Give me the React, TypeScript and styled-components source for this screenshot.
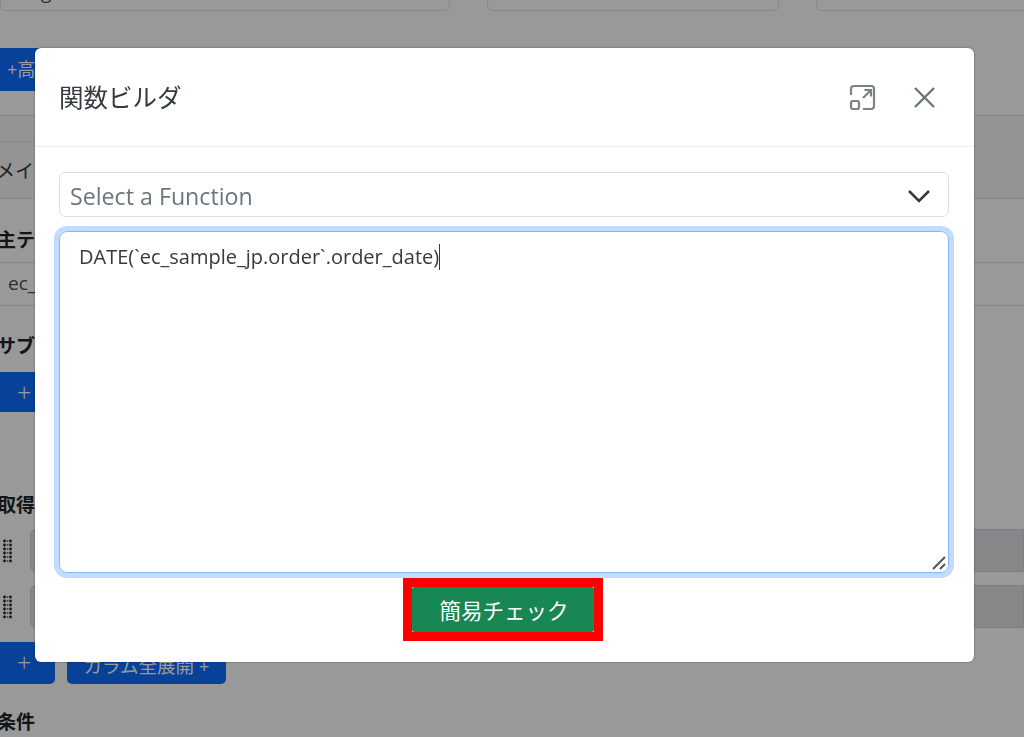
import styled, { createGlobalStyle } from 'styled-components';

const FONT_STACK = `"Open Sans", "Noto Sans CJK JP", sans-serif`;

const GlobalStyle = createGlobalStyle`
  html, body {
    margin: 0;
    padding: 0;
    background: white;
  }

  * {
    box-sizing: border-box;
  }
`;

function DragDots() {
  const rows = [0, 1, 2, 3, 4, 5];
  return (
    <StyledDots width="9" height="24" viewBox="0 0 9 24">
      {rows.map((row) => (
        <g key={row}>
          <circle cx="1.5" cy={2 + row * 4} r="1.4" fill="#212529" />
          <circle cx="4.5" cy={2 + row * 4} r="1" fill="#6c757d" />
          <circle cx="7.5" cy={2 + row * 4} r="1.4" fill="#212529" />
        </g>
      ))}
    </StyledDots>
  );
}

function ExpandIcon() {
  return (
    <svg width="27" height="27" viewBox="0 0 27 27" fill="none" stroke="#7a8288" strokeWidth="2.2">
      <path d="M2 11V5a3 3 0 0 1 3-3h17a3 3 0 0 1 3 3v17a3 3 0 0 1-3 3h-8" />
      <rect x="2" y="17" width="8" height="8" rx="2" />
      <path d="M14 14l8-8M15.5 6H22v6.5" />
    </svg>
  );
}

function CloseIcon() {
  return (
    <svg width="23" height="21" viewBox="0 0 23 21" fill="none" stroke="#6c757d" strokeWidth="2.4">
      <path d="M2 1l19 19M21 1L2 20" />
    </svg>
  );
}

function ChevronIcon() {
  return (
    <svg width="24" height="14" viewBox="0 0 24 14" fill="none" stroke="#343a40" strokeWidth="2.6">
      <path d="M2 2l10 10L22 2" />
    </svg>
  );
}

function ResizeGrip() {
  return (
    <StyledGrip width="14" height="14" viewBox="0 0 14 14" fill="none" stroke="#555" strokeWidth="2">
      <path d="M1 13L13 1M8 13l5-5" />
    </StyledGrip>
  );
}

function BackgroundPage() {
  return (
    <StyledPage>
      <StyledTopFields>
        <StyledTopField>
          <StyledTopText>g 1</StyledTopText>
        </StyledTopField>
        <StyledTopField />
        <StyledTopField />
      </StyledTopFields>
      <StyledAdvancedButton>+高</StyledAdvancedButton>
      <StyledCardHeader>
        <StyledTab />
        <StyledTabLabel>メイ</StyledTabLabel>
      </StyledCardHeader>
      <StyledBody>
        <StyledSectionLabel $top={29}>主テ</StyledSectionLabel>
        <StyledTableField>ec_</StyledTableField>
        <StyledSectionLabel $top={28}>サブ</StyledSectionLabel>
        <StyledAddRow $top={14} $height={40}>
          <StyledPlusButton $width={70}>+</StyledPlusButton>
        </StyledAddRow>
        <StyledSectionLabel $top={81}>取得</StyledSectionLabel>
        <StyledColumnRow $top={12}>
          <DragDots />
          <StyledColumnField />
        </StyledColumnRow>
        <StyledColumnRow $top={13}>
          <DragDots />
          <StyledColumnField />
        </StyledColumnRow>
        <StyledAddRow $top={14} $height={42}>
          <StyledPlusButton $width={59}>+</StyledPlusButton>
          <StyledExpandButton>カラム全展開 +</StyledExpandButton>
        </StyledAddRow>
        <StyledSectionLabel $top={26}>条件</StyledSectionLabel>
      </StyledBody>
    </StyledPage>
  );
}

function App() {
  return (
    <>
      <GlobalStyle />
      <BackgroundPage />
      <StyledOverlay>
        <StyledModal>
          <StyledHeader>
            <StyledTitle>関数ビルダ</StyledTitle>
            <StyledHeaderActions>
              <ExpandIcon />
              <CloseIcon />
            </StyledHeaderActions>
          </StyledHeader>
          <StyledModalBody>
            <StyledSelect>
              Select a Function
              <ChevronIcon />
            </StyledSelect>
            <StyledEditor>
              DATE(`ec_sample_jp.order`.order_date)
              <StyledCaret />
              <ResizeGrip />
            </StyledEditor>
            <StyledRedFrame>
              <StyledCheckButton>簡易チェック</StyledCheckButton>
            </StyledRedFrame>
          </StyledModalBody>
        </StyledModal>
      </StyledOverlay>
    </>
  );
}

const StyledPage = styled.div`
  width: 1024px;
  height: 737px;
  overflow: hidden;
  background: white;
  color: #212529;
  font-family: ${FONT_STACK};
`;

const StyledTopFields = styled.div`
  display: grid;
  grid-template-columns: 450px 292px 1fr;
  column-gap: 37px;
  height: 11px;
  margin-right: -20px;
`;

const StyledTopField = styled.div`
  height: 41px;
  margin-top: -30px;
  padding: 8px 40px;
  border: 1.5px solid #dee2e6;
  border-radius: 6px;
  font-size: 19px;
`;

const StyledTopText = styled.span`
  color: #495057;
`;

const StyledAdvancedButton = styled.div`
  width: 200px;
  height: 43px;
  margin-top: 37px;
  padding-left: 7px;
  background: #0d6efd;
  color: white;
  font-size: 18px;
  line-height: 43px;
`;

const StyledCardHeader = styled.div`
  height: 84px;
  margin-top: 24px;
  background: #f7f7f7;
  border-top: 1.5px solid #dee2e6;
  border-bottom: 1.5px solid #dee2e6;
`;

const StyledTab = styled.div`
  width: 100px;
  height: 26px;
  border-bottom: 1px solid #e4e7ea;
`;

const StyledTabLabel = styled.div`
  margin: 16px 0 0 -4px;
  font-size: 19px;
  line-height: 26px;
  color: #343a40;
`;

const StyledBody = styled.div`
  display: flex;
  flex-direction: column;
`;

const StyledSectionLabel = styled.div<{ $top: number }>`
  height: 24px;
  margin: ${({ $top }) => $top}px 0 0 -3px;
  font-size: 19px;
  font-weight: 700;
  line-height: 24px;
`;

const StyledTableField = styled.div`
  height: 44px;
  margin-top: 10px;
  padding-left: 8px;
  border-top: 1.5px solid #dee2e6;
  border-bottom: 1.5px solid #dee2e6;
  color: #495057;
  font-size: 19px;
  line-height: 41px;
`;

const StyledAddRow = styled.div<{ $top: number; $height: number }>`
  display: flex;
  gap: 12px;
  height: ${({ $height }) => $height}px;
  margin-top: ${({ $top }) => $top}px;
  margin-left: -4px;
`;

const StyledPlusButton = styled.div<{ $width: number }>`
  width: ${({ $width }) => $width}px;
  padding-left: 21px;
  border-radius: 0 5px 5px 0;
  background: #0d6efd;
  color: white;
  font-size: 25px;
  font-weight: 300;
  line-height: 40px;
`;

const StyledExpandButton = styled.div`
  display: flex;
  align-items: center;
  justify-content: center;
  width: 159px;
  padding-top: 3px;
  border-radius: 5px;
  background: #0d6efd;
  color: white;
  font-size: 18.5px;
  white-space: nowrap;
`;

const StyledColumnRow = styled.div<{ $top: number }>`
  display: flex;
  align-items: center;
  gap: 18px;
  height: 43px;
  margin-top: ${({ $top }) => $top}px;
  padding-left: 3px;
`;

const StyledDots = styled.svg`
  flex: none;
`;

const StyledColumnField = styled.div`
  flex: 1;
  height: 43px;
  border: 1px solid #ced4da;
  border-radius: 6px 0 0 6px;
  background: #dfe1e3;
`;

const StyledOverlay = styled.div`
  position: fixed;
  inset: 0;
  z-index: 10;
  padding: 48px 0 0 35px;
  background: rgba(0, 0, 0, 0.4);
`;

const StyledModal = styled.div`
  width: 939px;
  height: 614px;
  border-radius: 6px;
  background: white;
  box-shadow: 0 0 2px rgba(0, 0, 0, 0.5);
  color: #212529;
  font-family: ${FONT_STACK};
`;

const StyledHeader = styled.div`
  display: flex;
  align-items: center;
  justify-content: space-between;
  height: 99px;
  padding: 0 38px 0 24px;
  border-bottom: 1.5px solid #eceef0;
`;

const StyledTitle = styled.div`
  margin-top: -2px;
  color: #343a40;
  font-size: 24.5px;
`;

const StyledHeaderActions = styled.div`
  display: flex;
  align-items: center;
  gap: 37px;
`;

const StyledModalBody = styled.div`
  display: flex;
  flex-direction: column;
  align-items: center;
  padding: 25px 25px 0 24px;
`;

const StyledSelect = styled.div`
  display: flex;
  align-items: center;
  justify-content: space-between;
  align-self: stretch;
  height: 45px;
  padding: 2px 17px 0 10px;
  border: 1.5px solid #dee2e6;
  border-radius: 6px;
  color: #6c757d;
  font-size: 23.2px;
`;

const StyledEditor = styled.div`
  position: relative;
  align-self: stretch;
  height: 342px;
  margin-top: 14px;
  padding: 10px 19px;
  border: 1.5px solid #86b7fe;
  border-radius: 8px;
  box-shadow: 0 0 0 5px #c2dbfe;
  color: #343a40;
  font-size: 20px;
  line-height: 30px;
`;

const StyledCaret = styled.span`
  display: inline-block;
  width: 1px;
  height: 26px;
  vertical-align: -6px;
  background: #343a40;
`;

const StyledGrip = styled.svg`
  position: absolute;
  right: 2px;
  bottom: 2px;
`;

const StyledRedFrame = styled.div`
  position: relative;
  margin: 5px 2px 0 0;
  border: 9px solid #ff0000;
`;

const StyledCheckButton = styled.div`
  display: flex;
  align-items: center;
  justify-content: center;
  width: 182px;
  height: 45px;
  padding-left: 2px;
  border-radius: 2px;
  background: #198754;
  color: white;
  font-size: 21.5px;
`;

export default App;
